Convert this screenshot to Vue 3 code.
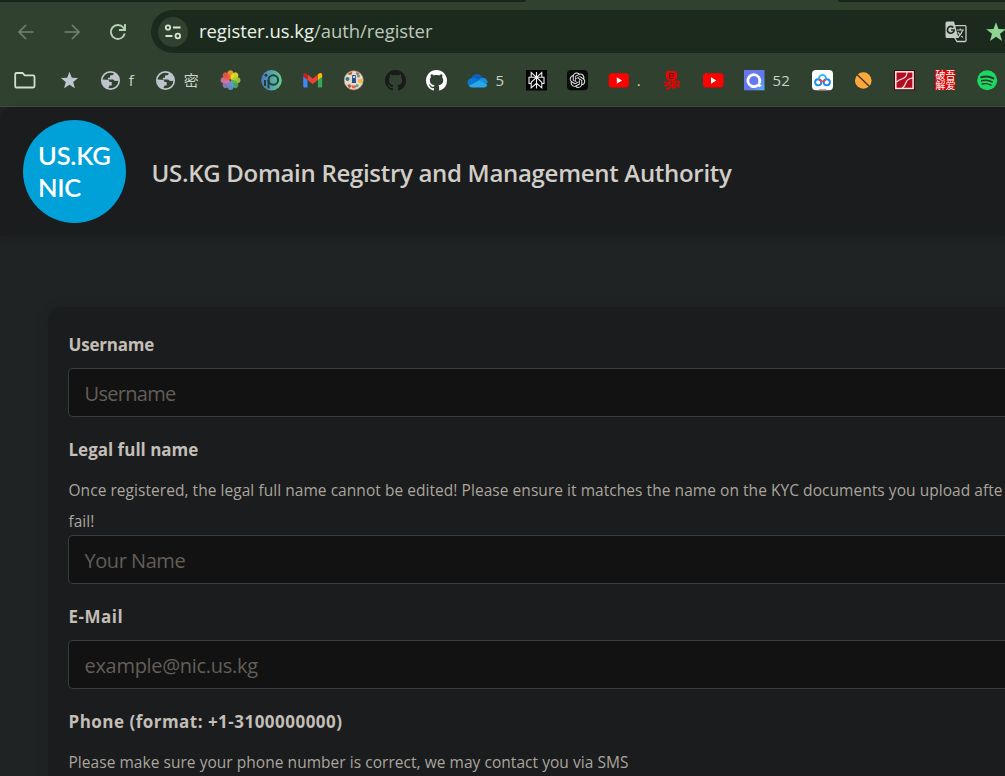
<script setup>
const petals = [
  ['#fba52b', 0], ['#f4e01d', 45], ['#a9cf3a', 90], ['#4fae5b', 135],
  ['#5d9bd8', 180], ['#8c7fc0', 225], ['#d879a8', 270], ['#f0563c', 315],
]
const github = 'M8 0C3.58 0 0 3.58 0 8c0 3.54 2.29 6.53 5.47 7.59.4.07.55-.17.55-.38 0-.19-.01-.82-.01-1.49-2.01.37-2.53-.49-2.69-.94-.09-.23-.48-.94-.82-1.13-.28-.15-.68-.52-.01-.53.63-.01 1.08.58 1.23.82.72 1.21 1.87.87 2.33.66.07-.52.28-.87.51-1.07-1.78-.2-3.64-.89-3.64-3.95 0-.87.31-1.59.82-2.15-.08-.2-.36-1.02.08-2.12 0 0 .67-.21 2.2.82.64-.18 1.32-.27 2-.27s1.36.09 2 .27c1.53-1.04 2.2-.82 2.2-.82.44 1.1.16 1.92.08 2.12.51.56.82 1.27.82 2.15 0 3.07-1.87 3.75-3.65 3.95.29.25.54.73.54 1.48 0 1.07-.01 1.93-.01 2.2 0 .21.15.46.55.38A8.01 8.01 0 0 0 16 8c0-4.42-3.58-8-8-8z'
const globes = [{ label: 'f', cls: 'w-f' }, { label: '密', cls: 'w-mi' }]
</script>

<template>
  <div class="screen">
    <div class="browser">
      <div class="tabstrip"><span class="tab-left"></span><span class="tab-active"></span><span class="tab-right"></span></div>
      <div class="toolbar">
        <div class="nav">
          <svg width="22" height="22" viewBox="0 0 22 22" fill="none" stroke="#718070" stroke-width="1.7"><path d="M18.500 11H4M11 4L4 11l7 7" /></svg>
          <svg width="22" height="22" viewBox="0 0 22 22" fill="none" stroke="#718070" stroke-width="1.7"><path d="M3.500 11H18M11 4l7 7-7 7" /></svg>
          <svg width="22" height="22" viewBox="0 0 22 22" fill="none" stroke="#b9d1b7" stroke-width="1.9"><path d="M17.700 12.500A7 7 0 1 1 16.300 6.500L18 8.300M18 3v6h-6" /></svg>
        </div>
        <div class="address">
          <span class="site">
            <svg width="20" height="20" viewBox="0 0 20 20" fill="none" stroke="#d9e6d5" stroke-width="1.8"><circle cx="5" cy="5.500" r="2.200" /><path d="M10 5.500h7.500M2.500 14h7" /><circle cx="14.800" cy="14" r="2.300" /></svg>
          </span>
          <span class="url"><b>register.us.kg</b>/auth/register</span>
          <svg class="translate" width="22" height="22" viewBox="0 0 22 22">
            <path d="M9.500 4.700h10.500a1 1 0 0 1 1 1v13.800a1 1 0 0 1-1 1H12L9.500 16.500" fill="none" stroke="#c6cbc3" stroke-width="1.300" />
            <path d="M2 .5h7l4.500 16.500H2a1.500 1.500 0 0 1-1.500-1.500V2A1.500 1.500 0 0 1 2 .5z" fill="#c6cbc3" />
            <path d="M8.300 6.500A3.400 3.400 0 1 0 9 10V9H6" fill="none" stroke="#1b2a1d" stroke-width="1.700" />
            <path d="M12 9h7M15.300 7.500V9M17.700 9c-.8 3-2.200 5-4.700 7.500M13 11c1 2.200 2.700 4 5 5.500" fill="none" stroke="#c6cbc3" stroke-width="1.200" />
          </svg>
          <svg class="fav" width="22" height="22" viewBox="0 0 22 22"><path fill="#8ed493" d="M11 1.200l2.500 6.900 7.300.2-5.800 4.500 2 7.100-6-4.100-6 4.100 2-7.100L1.200 8.300l7.300-.2z" /></svg>
        </div>
      </div>
      <div class="bookmarks">
        <svg class="folder" width="22" height="21" viewBox="0 0 22 21" fill="none" stroke="#d3ded0" stroke-width="1.800"><path d="M2.500 3h6l2.200 2.400h8.400a1.400 1.400 0 0 1 1.400 1.400v9.300a1.400 1.400 0 0 1-1.400 1.400H2.500a1.300 1.300 0 0 1-1.300-1.300V4.300A1.300 1.300 0 0 1 2.500 3z" /></svg>
        <svg class="ico" viewBox="0 0 21 21"><path fill="#c0c6cf" d="M10.500 1.700l2.300 6 6.300.3-4.900 4 1.700 6.300-5.400-3.500-5.400 3.500L6.800 12 1.900 8l6.300-.3z" /></svg>
        <div v-for="g in globes" :key="g.label" class="mark">
          <svg class="ico" viewBox="0 0 21 21"><circle cx="10.500" cy="10.500" r="8.700" fill="#304130" stroke="#bec4cb" stroke-width="1.700" /><path fill="#bec4cb" d="M2 9.500l5 .3c2 .2 2.500 1 2.500 2.200h2.200v3.500H9.500l-1.500 3.500C4.500 18 2 14.500 2 9.500zM12 2l2 1-1 2-3 .5v2.200H7.700l.3 1.800h5c1 0 1.200 1.500 2.300 1.500l3.700-.2C19 5 15.500 2 12 2z" /></svg>
          <span class="label" :class="g.cls">{{ g.label }}</span>
        </div>
        <svg class="ico" viewBox="0 0 21 21"><ellipse v-for="p in petals" :key="p[1]" cx="10.500" cy="4.800" rx="3.200" ry="4.500" :fill="p[0]" fill-opacity=".88" :transform="`rotate(${p[1]} 10.500 10.200)`" /></svg>
        <svg class="ico" viewBox="0 0 21 21"><defs><linearGradient id="pg"><stop offset="0" stop-color="#477ac5" /><stop offset="1" stop-color="#61d08e" /></linearGradient></defs><circle cx="10.500" cy="10.300" r="10.300" fill="url(#pg)" /><g fill="none" stroke="#253d3d" stroke-width="2"><circle cx="12.300" cy="10" r="4.800" /><path d="M7.500 10v8.500M4 10v6" /></g><circle cx="5" cy="5.300" r="1.500" fill="#253d3d" /></svg>
        <svg class="ico" viewBox="0.800 0 21 21"><path fill="#4285f4" d="M1 6v10.200c0 .8.600 1.300 1.300 1.300h3V9z" /><path fill="#34a853" d="M15.700 17.500h3c.8 0 1.300-.5 1.300-1.300V6l-4.300 3z" /><path fill="#fbbc04" d="M15.700 4.500V10L20 6.800V5c0-2-2-2.700-3.300-1.500z" /><path fill="#ea4335" d="M5.300 10V4.500l5.200 3.900 5.200-3.900V10l-5.200 4z" /><path fill="#c5221f" d="M1 5v1.800L5.300 10V4.500L4.200 3.600C2.700 2.500 1 3.300 1 5z" /></svg>
        <svg class="ico" viewBox="0.800 0 21 21"><circle cx="10.500" cy="10.300" r="9.600" fill="#ead9c6" stroke="#a98268" stroke-width=".7" /><path fill="#a55b4a" d="M5 3l4-1-.5 2.500-3 .5zM13 2l3 1.500-1 1.500-2-.5zM4 15l3-1 1 3-2 1z" /><path fill="#244f8d" d="M9 5h3.500l.3 8H8.700z" /><circle cx="4.300" cy="9" r="2" fill="#297d9b" /><circle cx="17" cy="11" r="2.300" fill="#f3ba38" /><circle cx="10.800" cy="7" r="1" fill="#fff" /><circle cx="15.300" cy="6" r="1.500" fill="#4a9bb2" /><path fill="#58a4b5" d="M13 14l3 1-2 2.500-2-1z" /><path fill="#e76036" d="M8 15.500h5l-1 2.700H9z" /></svg>
        <svg class="ico" viewBox="0 0 16 16"><path fill="#181a1b" :d="github" /></svg>
        <svg class="ico" viewBox="0 0 16 16"><path fill="#fff" :d="github" /></svg>
        <div class="mark">
          <svg class="ico" viewBox="0 0 21 21"><path fill="#0f5fbd" d="M4 9C6 3 12.500 2.500 15.500 7.500L12 12z" /><path fill="#0a78d2" d="M5 8c3-1 5 1 8 2.500L3 16.500C-1 14 0 8.500 5 8z" /><path fill="#1490df" d="M12 10c3-4 8-2 8.800 2.500L17 15z" /><path fill="#29a8ea" d="M2 15.700L12.500 10.200l7.800 4.600c-.5 2-1.700 2.600-3.500 2.600H5c-1.300 0-2.300-.5-3-1.700z" /></svg>
          <span class="label w-5">5</span>
        </div>
        <svg class="ico" viewBox="0 0 21 21"><path fill="#030303" d="M0 0h21v20.500H0z" /><path fill="none" stroke="#eee" stroke-width="1.100" d="M10.500 2v16.500M10.500 7.300L5.200 2.500v4.800M10.500 7.300l5.300-4.800v4.800M5.200 13.500H3V7.300h15v6.200h-2.200M10.500 7.300l-5.300 5v5.500l5.300-4.500 5.300 4.500v-5.500z" /></svg>
        <svg class="ico" viewBox="0 0 21 21"><rect width="21" height="20.300" rx="4" fill="#090b0a" /><path transform="translate(2.700 2.400) scale(.65)" fill="#e0e3df" d="M22.282 9.821a5.985 5.985 0 0 0-.516-4.910 6.046 6.046 0 0 0-6.510-2.900A6.065 6.065 0 0 0 4.981 4.180a5.985 5.985 0 0 0-3.998 2.900 6.046 6.046 0 0 0 .743 7.097 5.980 5.980 0 0 0 .510 4.911 6.051 6.051 0 0 0 6.515 2.900A5.985 5.985 0 0 0 13.260 24a6.056 6.056 0 0 0 5.772-4.206 5.990 5.990 0 0 0 3.997-2.900 6.056 6.056 0 0 0-.747-7.073zM13.260 22.430a4.476 4.476 0 0 1-2.876-1.040l.141-.081 4.779-2.758a.795.795 0 0 0 .392-.681v-6.737l2.020 1.168a.071.071 0 0 1 .038.052v5.583a4.504 4.504 0 0 1-4.494 4.494zM3.600 18.304a4.470 4.470 0 0 1-.535-3.014l.142.085 4.783 2.759a.771.771 0 0 0 .780 0l5.843-3.369v2.332a.080.080 0 0 1-.033.062L9.740 19.950a4.500 4.500 0 0 1-6.140-1.646zM2.340 7.896a4.485 4.485 0 0 1 2.366-1.973V11.600a.766.766 0 0 0 .388.676l5.815 3.355-2.020 1.168a.076.076 0 0 1-.071 0l-4.830-2.786A4.504 4.504 0 0 1 2.340 7.872zm16.597 3.855l-5.833-3.387L15.119 7.200a.076.076 0 0 1 .071 0l4.830 2.791a4.494 4.494 0 0 1-.676 8.105v-5.678a.790.790 0 0 0-.407-.667zm2.010-3.023l-.141-.085-4.774-2.782a.776.776 0 0 0-.785 0L9.409 9.230V6.897a.066.066 0 0 1 .028-.061l4.830-2.787a4.500 4.500 0 0 1 6.680 4.660zm-12.640 4.135l-2.020-1.164a.080.080 0 0 1-.038-.057V6.075a4.500 4.500 0 0 1 7.375-3.453l-.142.080L8.704 5.460a.795.795 0 0 0-.393.681zm1.097-2.365l2.602-1.500 2.607 1.500v2.999l-2.597 1.500-2.607-1.500z" /></svg>
        <div class="mark">
          <svg class="ico" viewBox="0 0 21 21"><rect x=".8" y="3.300" width="20" height="14.200" rx="3" fill="#f00" /><path fill="#fff" d="M8.800 7.300v6.400l5.300-3.200z" /></svg>
          <span class="label w-dot">.</span>
        </div>
        <svg class="ico" viewBox="1 0 21 21"><path fill="#f20000" d="M6 1h8l2 2v5l-2.500 2.500H7.500L5 8V3z" /><path fill="none" stroke="#3a2a20" stroke-width="1" d="M12.500 8.500h-4v-5h4v2.500h-4" /><path fill="none" stroke="#f20000" stroke-width="1.500" d="M8 10l2 2.500M13 10l-2 2.500M3 12.500h4l2 1-3 2H3M5 18.500h2.500l4-4 3-3h3.500v2.500l-2 1M12 15c0-2 3.500-1 3 .8s-3 3.400-3.500 1.400zM16.500 17.500l2-2" /></svg>
        <svg class="ico" viewBox="0 0 21 21"><rect y="3.300" width="20.500" height="14.200" rx="3" fill="#f00" /><path fill="#fff" d="M8 7.300v6.400l5.300-3.200z" /></svg>
        <div class="mark">
          <svg class="ico" viewBox="0 0 21 21"><defs><linearGradient id="qg" x2="1" y2="1"><stop offset="0" stop-color="#6879ec" /><stop offset=".6" stop-color="#6477ee" /><stop offset="1" stop-color="#59b5f5" /></linearGradient></defs><path fill="url(#qg)" d="M0 0h20.500v20.300H0z" /><path fill="none" stroke="#fff" stroke-width="2.800" stroke-linecap="round" d="M15.500 12.500a6 6 0 1 0-2.600 3.200" /><path fill="#fff" d="M14 13l4 2.500-2.500 1.500-2.500-1z" /></svg>
          <span class="label w-52">52</span>
        </div>
        <svg class="ico" viewBox="0 0 21 21"><rect width="21" height="20.300" rx="4" fill="#fff" /><g fill="none" stroke-width="1.900"><circle cx="6.200" cy="12.300" r="3.100" stroke="#168df0" /><circle cx="14.800" cy="12.300" r="3.100" stroke="#168df0" /><path stroke="#26b5f5" d="M7.200 9.500a3.500 3.500 0 1 1 6.600 0" /><path stroke="#ec4257" d="M7.300 9.300c1 2.800 5.200 2.800 6.400 0" /></g><path fill="#ec8994" d="M7 19h7v1.300H7z" /></svg>
        <svg class="ico" viewBox="0 0 21 21"><circle cx="10.300" cy="10.500" r="8.300" fill="#ffa73a" /><path stroke="#2f3325" stroke-width="1.200" d="M4 4.500l12.700 12.300" /></svg>
        <svg class="ico" viewBox="0 0 21 21"><path fill="#480913" d="M0 0h21v20.300H0z" /><rect x="1.800" y="1.800" width="17.300" height="16.700" fill="#b20b20" stroke="#f4e9ea" stroke-width="1.500" /><path fill="none" stroke="#f4e9ea" stroke-width="1.200" d="M13 2c0 4-1.500 5.500-4 6.500-3.500 1-5 2-6.500 3.500M19 8c-4 .5-6 1.500-7 4.500-.8 2.500-1.500 4-4 6" /></svg>
        <div class="pojie">破吾解爱</div>
        <svg class="ico" viewBox="0 0 21 21"><circle cx="10.200" cy="10.200" r="10" fill="#1ed760" /><path fill="none" stroke="#263a29" stroke-linecap="round" d="M4.200 7.200c4.300-1.200 8.800-.8 12.200 1.200" stroke-width="2" /><path fill="none" stroke="#263a29" stroke-linecap="round" d="M4.800 10.800c3.700-1 7.400-.5 10.400 1.100" stroke-width="1.700" /><path fill="none" stroke="#263a29" stroke-linecap="round" d="M5.300 14c3-.7 6-.3 8.700 1.100" stroke-width="1.400" /></svg>
      </div>
    </div>

    <div class="page">
      <header class="header">
        <div class="logo"><span class="l1">US.KG</span><span class="l2">NIC</span></div>
        <h1><span>US.KG Domain Registry and Management Authority</span></h1>
      </header>
      <main class="card">
        <label class="name"><span class="t-user">Username</span></label>
        <div class="field"><span class="p-user">Username</span></div>
        <label class="name gap"><span>Legal full name</span></label>
        <p class="hint"><span class="h-legal">Once registered, the legal full name cannot be edited! Please ensure it matches the name on the KYC documents you upload afte</span><br><span>fail!</span></p>
        <div class="field flush"><span class="p-name">Your Name</span></div>
        <label class="name gap"><span class="t-mail">E-Mail</span></label>
        <div class="field"><span class="p-mail">example@nic.us.kg</span></div>
        <label class="name gap"><span class="t-phone">Phone (format: +1-3100000000)</span></label>
        <p class="hint"><span class="h-phone">Please make sure your phone number is correct, we may contact you via SMS</span></p>
      </main>
    </div>
  </div>
</template>

<style>
body { margin: 0; background: #1f2324; overflow: hidden; }
</style>

<style scoped>
.screen { width: 1005px; height: 776px; overflow: hidden; background: #1f2324; font-family: "Open Sans", "Noto Sans", "Noto Sans CJK SC", sans-serif; }
svg { display: block; flex: none; }
.browser { height: 107px; box-sizing: border-box; background: #304130; border-bottom: 1px solid #434e41; }
.tabstrip { height: 2px; display: flex; background: #304130; }
.tab-left { width: 526px; background: #17251b; border-radius: 0 0 3px 0; }
.tab-active { width: 312px; }
.tab-right { flex: 1; background: #17251b; border-radius: 0 0 0 3px; }
.toolbar { height: 51px; padding-top: 8px; box-sizing: border-box; display: flex; }
.nav { width: 151px; box-sizing: border-box; flex: none; padding-left: 14.500px; height: 43px; display: flex; align-items: center; gap: 24px; }
.address { width: 860px; height: 43px; flex: none; background: #1b2a1d; border-radius: 22px 0 0 22px; display: flex; align-items: center; }
.site { width: 30px; height: 30px; margin-left: 7px; border-radius: 50%; background: #304130; display: flex; align-items: center; justify-content: center; flex: none; }
.url { width: 746px; margin-left: 11px; flex: none; font-size: 18.500px; line-height: 42px; letter-spacing: -.05px; color: #bdc8bb; white-space: nowrap; position: relative; top: -1px; }
.url b { font-weight: 400; color: #eaf2e7; }
.fav { margin-left: 18px; }
.bookmarks { height: 53px; padding: 17px 0 0 14px; box-sizing: border-box; display: flex; gap: 20.1px; }
.folder { margin-right: 3px; }
.ico { width: 21px; height: 21px; }
.mark { display: flex; flex: none; }
.label { margin-left: 7.500px; font-size: 15px; line-height: 21px; color: #cbd5c8; white-space: nowrap; }
.w-f { width: 6.500px; }
.w-mi { width: 16.500px; }
.w-5 { width: 10.500px; }
.w-dot { width: 5.100px; }
.w-52 { width: 19.500px; }
.pojie { width: 20px; height: 20px; margin-right: 1px; flex: none; background: #dc0707; color: #fff; font-size: 10px; line-height: 10px; font-family: "Noto Sans CJK SC", sans-serif; word-break: break-all; }
.page { height: 669px; }
.header { height: 129px; background: #1a1c1e; display: flex; border-radius: 12px 0 0 0; box-shadow: 0 1px 5px rgba(24, 26, 27, .35); }
.logo { width: 103px; height: 103px; margin: 13px 0 0 23px; border-radius: 50%; background: #00a0d8; color: #fff; flex: none; box-sizing: border-box; padding: 19px 0 0 15px; font: 600 25.500px/32px Lato, sans-serif; display: flex; flex-direction: column; white-space: nowrap; }
.l1 { letter-spacing: -.2px; }
.l2 { letter-spacing: -.3px; }
h1 { margin: 45px 0 0 25.500px; font-size: 24px; line-height: 42px; font-weight: 600; letter-spacing: -.3px; color: #d1cdc7; white-space: nowrap; }
.card { margin: 71px 0 0 48px; width: 957px; height: 480px; box-sizing: border-box; padding: 22px 0 0 20px; background: #1a1c1e; border-radius: 14px 0 0 0; box-shadow: 0 0 12px rgba(24, 26, 27, .2); }
.name { display: block; height: 32px; padding-left: .5px; font-size: 17px; line-height: 32px; font-weight: 700; color: #c3beb6; white-space: nowrap; }
.t-user { letter-spacing: -.2px; }
.t-mail { letter-spacing: .5px; }
.t-phone { letter-spacing: .48px; }
.gap { margin-top: 17px; }
.field { height: 49px; margin-top: 7px; box-sizing: border-box; border: 1px solid #383d40; border-right: 0; border-radius: 5px 0 0 5px; background: #121212; padding-left: 15.500px; font-size: 20px; line-height: 50px; color: #625e58; white-space: nowrap; }
.p-user { letter-spacing: -.7px; }
.p-name { letter-spacing: -.45px; }
.p-mail { letter-spacing: -.3px; }
.flush { margin-top: 0; }
.hint { margin: 9px 0 -2px; padding-left: .5px; font-size: 15.500px; line-height: 31px; color: #aba59c; white-space: nowrap; }
.h-legal { letter-spacing: .048px; }
.h-phone { letter-spacing: .04px; }
</style>
